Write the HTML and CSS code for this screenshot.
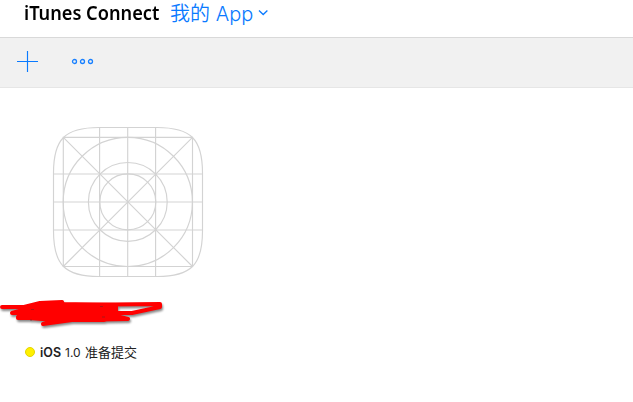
FILE: index.html
```html
<!DOCTYPE html>
<html lang="zh-CN">
<head>
<meta charset="utf-8">
<title>iTunes Connect</title>
<link rel="stylesheet" href="styles.css">
</head>
<body>
<header class="header">
  <div class="brand"><span class="brand-text">iTunes Connect</span></div>
  <a class="section"><span class="section-zh">我的</span> <span class="section-app">App</span></a>
  <svg class="chevron" width="10" height="8" viewBox="0 0 10 8"><path d="M1 1.5 5.2 5.5 9.4 1.5"/></svg>
</header>
<nav class="toolbar">
  <svg class="add" width="22" height="21" viewBox="0 0 22 21"><path d="M0 10.5H21M10.5 0V21"/></svg>
  <svg class="more" width="24" height="9" viewBox="0 0 24 9"><circle cx="3.5" cy="4.5" r="2"/><circle cx="11.5" cy="4.5" r="2"/><circle cx="19.5" cy="4.5" r="2"/></svg>
</nav>
<main class="apps">
  <article class="app">
    <svg class="app-icon" width="152" height="152" viewBox="0 0 152 152">
      <path d="M1.5 47C1.5 13 13 1.5 47 1.5H105C139 1.5 150.5 13 150.5 47V105C150.5 139 139 150.5 105 150.5H47C13 150.5 1.5 139 1.5 105Z"/>
      <path d="M11.3 11.3H140.5V140.5H11.3ZL140.5 140.5M140.5 11.3 11.3 140.5"/>
      <path d="M47.6 1.5V150.5M75.7 1.5V150.5M103.6 1.5V150.5M1.5 48H150.5M1.5 76H150.5M1.5 104H150.5"/>
      <circle cx="75.8" cy="75.9" r="64.6"/><circle cx="75.8" cy="75.9" r="39.4"/><circle cx="75.8" cy="75.9" r="28"/>
    </svg>
    <svg class="scribble" width="170" height="32" viewBox="0 298 170 32">
      <path class="fill" d="M22 312 42 303 62 304 116 305V315L104 320 70 320 42 319 18 317Z"/>
      <path d="M2 307H24L40 303 62 302 63 305 160 304 160 307 132 313 104 313 128 319 72 320 43 324 62 318 18 318 30 313 12 313 30 308"/>
      <path class="speck" d="M31 309.5H34M30 320H32M100 306.500H103M102 317H105"/>
    </svg>
    <div class="status"><i class="dot"></i><b class="platform">iOS</b><span class="version">1.0</span><span class="state">准备提交</span></div>
  </article>
</main>
</body>
</html>
```
FILE: styles.css
```css
body{margin:0;background:#fff;font-family:Inter,"Noto Sans CJK SC",sans-serif;overflow:hidden}
svg{display:block;fill:none;flex:none}
.header{display:flex;height:37px;padding-left:24px;border-bottom:1px solid #d9d9d9;white-space:nowrap}
.brand{width:146px;font:600 19px/26px "Noto Sans",sans-serif;color:#000}
.brand-text{display:inline-block;transform:scaleX(.957);transform-origin:left}
.section{width:88px;color:#0a7aff;font-size:20px;line-height:25px;font-weight:300}
.section-zh{font-family:"Noto Sans CJK SC",sans-serif;font-weight:350}
.section-app{letter-spacing:.1px}
.chevron{margin-top:9px;stroke:#0a7aff;stroke-width:1.3}
.toolbar{box-sizing:border-box;display:flex;align-items:center;height:50px;padding:0 0 2px 17px;background:#f1f1f1;border-bottom:1px solid #e6e6e6}
.add{stroke:#0a7aff;stroke-width:1.15}
.more{margin-left:32px;stroke:#1980ff;stroke-width:1.3}
.app-icon{margin:38px 0 0 52px;stroke:#d3d3d3;stroke-width:1.15}
.scribble{margin-top:20px;stroke:red;stroke-width:4;stroke-linecap:round;stroke-linejoin:round;filter:drop-shadow(1px 2px 1px #0007)}
.fill{fill:red}
.speck{stroke:#722;stroke-width:.6;stroke-linecap:butt}
.status{display:flex;align-items:center;margin:14px 0 0 25px;height:18px;font-size:12px;line-height:18px;color:#222;white-space:nowrap}
.dot{box-sizing:border-box;width:10px;height:10px;border:1px solid #e4d500;border-radius:50%;background:#fff000;margin:-2px 5px 0 0}
.platform{font-weight:600;font-size:12.5px;width:25px}
.version{width:20px}
.state{font-size:13px;line-height:16px;height:18px;font-family:"Noto Sans CJK SC",sans-serif}
```
